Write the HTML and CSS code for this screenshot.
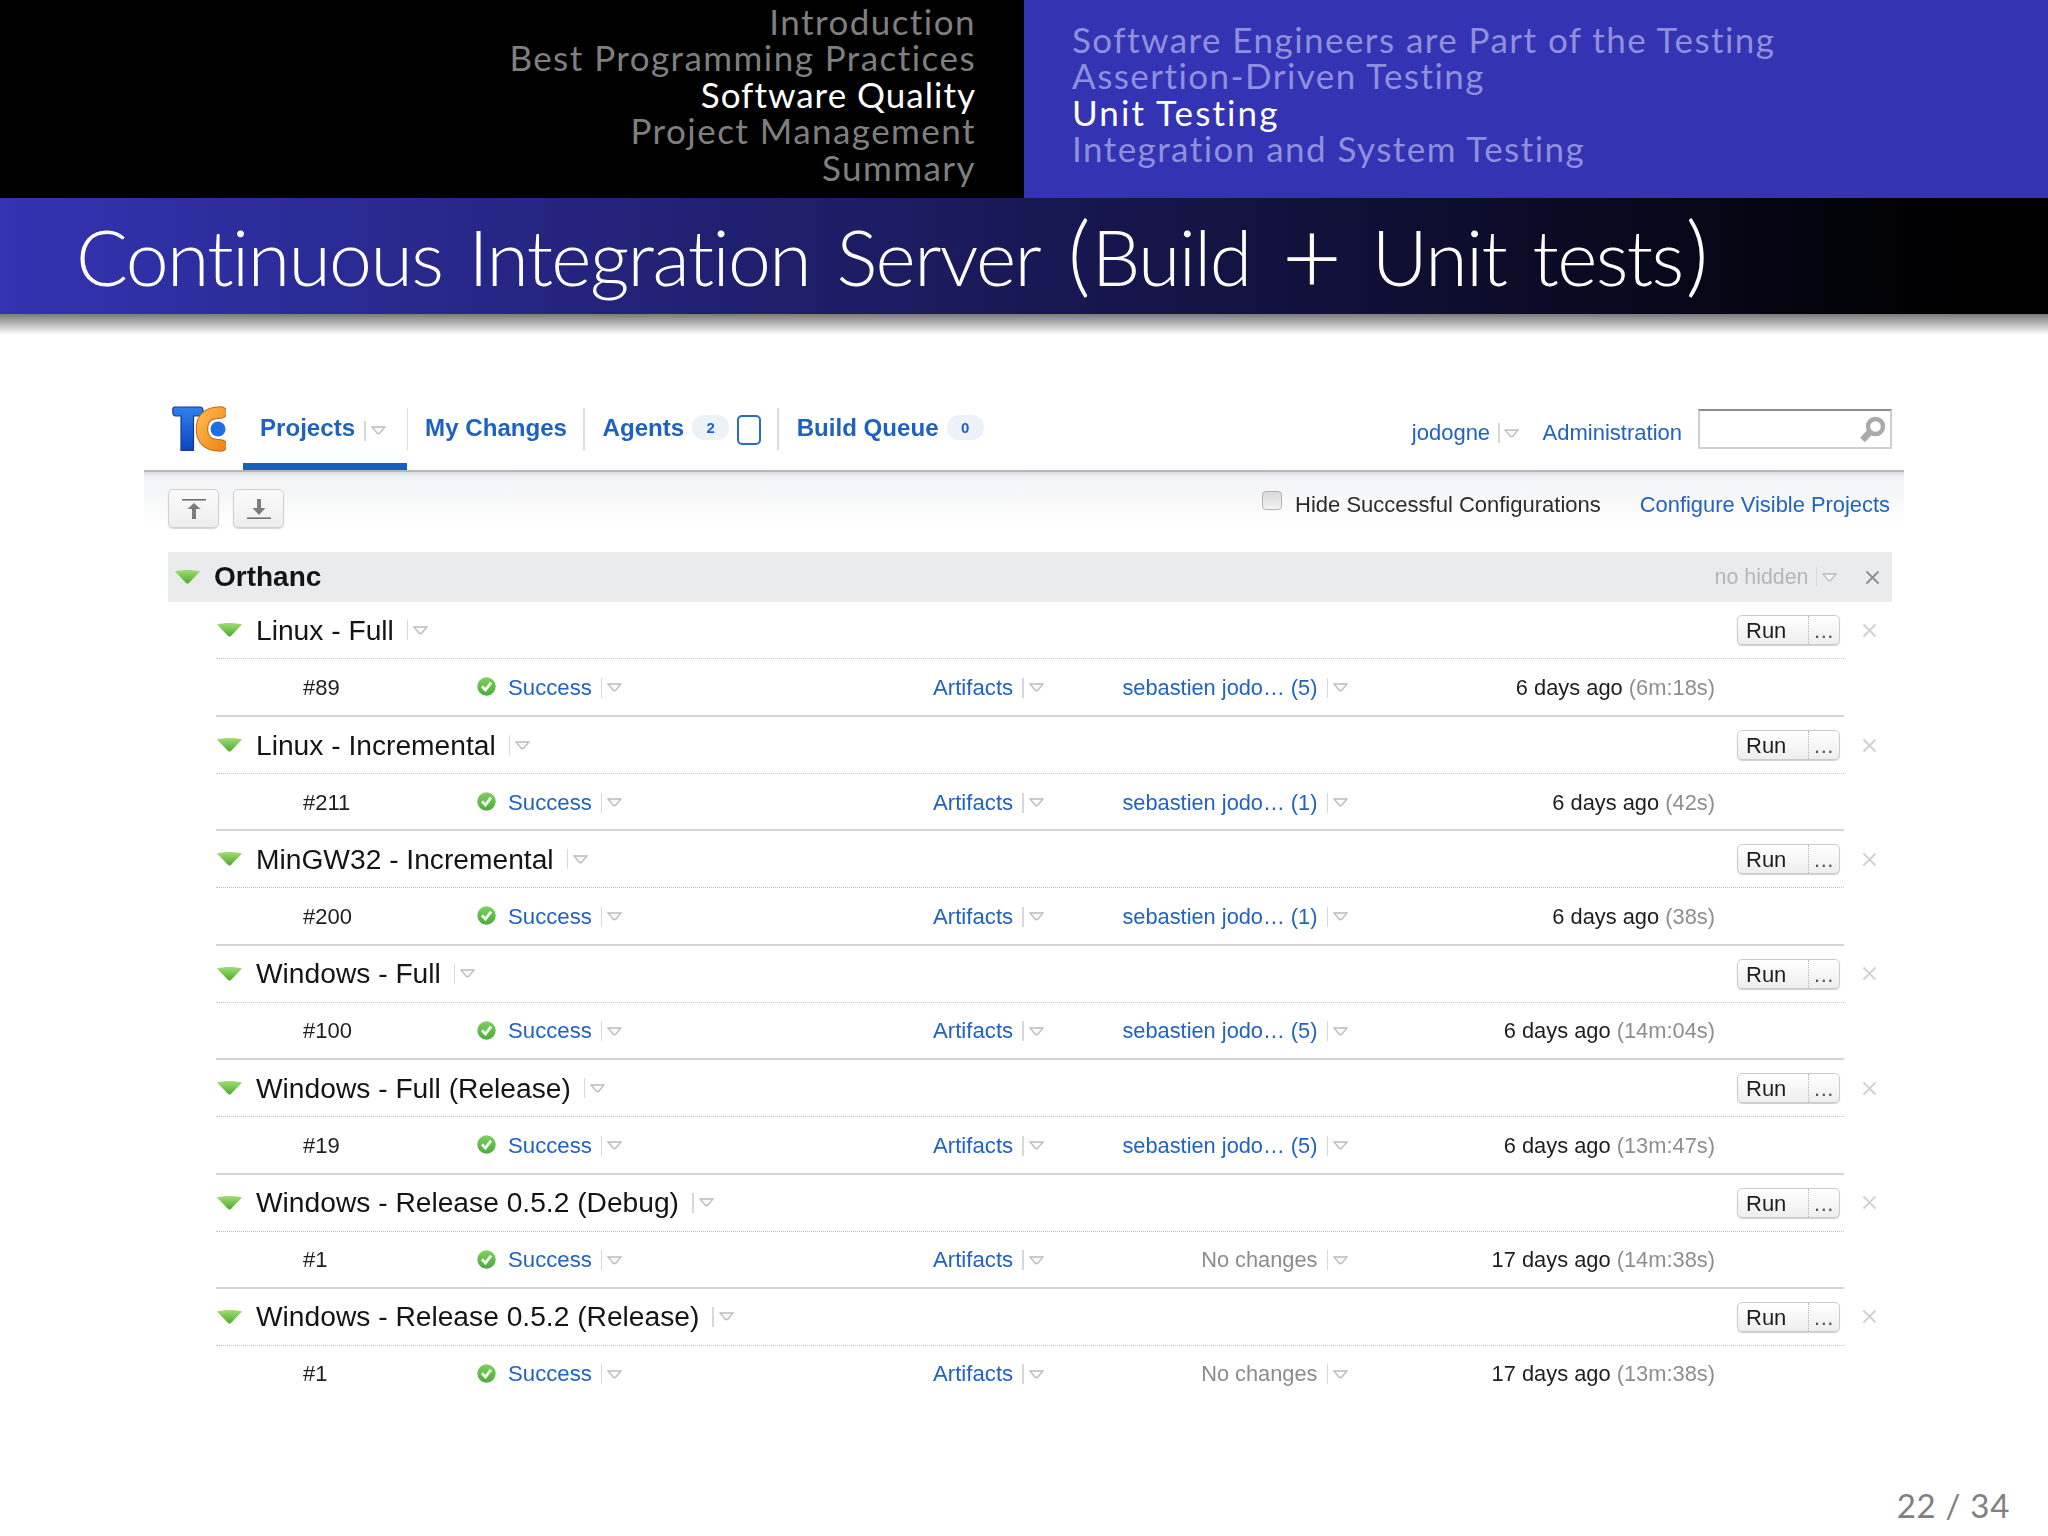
FILE: index.html
```html
<!DOCTYPE html>
<html lang="en">
<head>
<meta charset="utf-8">
<title>Continuous Integration Server (Build + Unit tests)</title>
<link rel="stylesheet" href="styles.css">
</head>
<body>
<svg class="defs" width="0" height="0" aria-hidden="true">
  <defs>
    <linearGradient id="g-green" x1="0" y1="0" x2="0" y2="1"><stop offset="0" stop-color="#a4dc72"/><stop offset="1" stop-color="#4bac2c"/></linearGradient>
    <linearGradient id="g-ok" x1="0" y1="0" x2="0" y2="1"><stop offset="0" stop-color="#7fd060"/><stop offset="1" stop-color="#49ab3a"/></linearGradient>
    <linearGradient id="g-blue" x1="0" y1="0" x2="0" y2="1"><stop offset="0" stop-color="#2f80ee"/><stop offset="1" stop-color="#0c46c0"/></linearGradient>
    <linearGradient id="g-orange" x1="0" y1="0" x2="1" y2="1"><stop offset="0" stop-color="#ffb54a"/><stop offset="1" stop-color="#f08a1c"/></linearGradient>
    <symbol id="i-tri" viewBox="0 0 27 15"><path d="M1 2.5C8 .5 19 .5 26 2.5L15.2 13.8C14.2 14.9 12.8 14.9 11.8 13.8Z" fill="url(#g-green)"/></symbol>
    <symbol id="i-arrow" viewBox="0 0 15 9"><path d="M1 1H14L8.5 7.5H6.5Z" fill="#fbfbfb" stroke="#b9bcc2" stroke-width="1.3"/></symbol>
    <symbol id="i-ok" viewBox="0 0 19 19"><circle cx="9.5" cy="9.5" r="9.2" fill="url(#g-ok)"/><path d="M5 9.3L8.4 13L14 5.6" fill="none" stroke="#f4fbf0" stroke-width="2.8"/></symbol>
    <symbol id="i-x" viewBox="0 0 15 15"><path d="M1.5 1.5L13.5 13.5M13.5 1.5L1.5 13.5" fill="none" stroke="currentColor" stroke-width="1.8"/></symbol>
  </defs>
</svg>

<header class="beamer-nav">
  <div class="nav-left">
    <div>Introduction</div>
    <div>Best Programming Practices</div>
    <div class="current">Software Quality</div>
    <div>Project Management</div>
    <div>Summary</div>
  </div>
  <div class="nav-right">
    <div>Software Engineers are Part of the Testing</div>
    <div>Assertion-Driven Testing</div>
    <div class="current">Unit Testing</div>
    <div>Integration and System Testing</div>
  </div>
</header>
<h1 class="frame-title">Continuous Integration Server <span class="paren">(</span>Build <span class="plus">+</span> Unit tests<span class="paren">)</span></h1>
<div class="frame-shadow"></div>

<main class="tc">
  <nav class="tc-nav">
    <svg class="logo" viewBox="0 0 54 46" width="54" height="46" aria-label="TeamCity">
      <path d="M3 1H28C30 1 31 2.5 31 4.5V7C31 9 30 10 28 10H21.5V44.5H9V10H4C1.8 10 .8 8.5 .8 6V3.5C.8 2 1.5 1 3 1Z" fill="url(#g-blue)" stroke="#123c94" stroke-width="1.2"/>
      <path d="M49 6.5C34 6.5 30 14 30 23C30 33 35 39.5 49 39.5" fill="none" stroke="#c9640f" stroke-width="12.5" stroke-linecap="round"/>
      <path d="M49 6.5C34 6.5 30 14 30 23C30 33 35 39.5 49 39.5" fill="none" stroke="url(#g-orange)" stroke-width="10.5" stroke-linecap="round"/>
      <circle cx="46" cy="23" r="7.5" fill="#1f6fe0"/>
    </svg>
    <div class="tab tab-active">
      <a class="tab-link">Projects</a>
      <span class="mini-sep"></span>
      <svg class="arrow"><use href="#i-arrow"/></svg>
    </div>
    <span class="tab-sep"></span>
    <div class="tab"><a class="tab-link">My Changes</a></div>
    <span class="tab-sep"></span>
    <div class="tab">
      <a class="tab-link">Agents</a>
      <span class="badge">2</span>
      <span class="agent-box"></span>
    </div>
    <span class="tab-sep"></span>
    <div class="tab">
      <a class="tab-link">Build Queue</a>
      <span class="badge">0</span>
    </div>
    <div class="nav-user">
      <a class="link">jodogne</a>
      <span class="mini-sep"></span>
      <svg class="arrow"><use href="#i-arrow"/></svg>
      <a class="link admin">Administration</a>
      <div class="search">
        <svg viewBox="0 0 26 27" width="26" height="27"><circle cx="15.5" cy="10.5" r="7.5" fill="none" stroke="#a9a9a9" stroke-width="4.5"/><path d="M9.5 16.5L2.5 24" stroke="#a9a9a9" stroke-width="6.5"/></svg>
      </div>
    </div>
  </nav>

  <div class="toolbar">
    <button class="icon-btn" type="button" aria-label="Collapse all">
      <svg viewBox="0 0 24 20" width="24" height="20"><path d="M0 .8H24" stroke="#6f6f6f" stroke-width="1.6"/><path d="M12 4L18.5 10H14V20H10V10H5.5Z" fill="#7c7c7c"/></svg>
    </button>
    <button class="icon-btn" type="button" aria-label="Expand all">
      <svg viewBox="0 0 24 20" width="24" height="20"><path d="M0 19.2H24" stroke="#6f6f6f" stroke-width="1.6"/><path d="M10 0H14V9H18.5L12 16L5.5 9H10Z" fill="#7c7c7c"/></svg>
    </button>
    <span class="check"></span>
    <span class="check-label">Hide Successful Configurations</span>
    <a class="link config">Configure Visible Projects</a>
  </div>

  <section class="group">
    <div class="group-head">
      <svg class="tri"><use href="#i-tri"/></svg>
      <span class="group-name">Orthanc</span>
      <span class="no-hidden">no hidden</span>
      <span class="mini-sep"></span>
      <svg class="arrow"><use href="#i-arrow"/></svg>
      <svg class="x x-dark"><use href="#i-x"/></svg>
    </div>

    <article class="proj proj-first">
      <div class="proj-head">
        <svg class="tri"><use href="#i-tri"/></svg>
        <span class="proj-name">Linux - Full</span>
        <span class="mini-sep"></span><svg class="arrow"><use href="#i-arrow"/></svg>
        <div class="run"><span class="run-main">Run</span><span class="run-more">...</span></div>
        <svg class="x"><use href="#i-x"/></svg>
      </div>
      <div class="build">
        <span>#89</span>
        <span class="status"><svg class="ok"><use href="#i-ok"/></svg><a class="link">Success</a><span class="mini-sep"></span><svg class="arrow"><use href="#i-arrow"/></svg></span>
        <span class="status"><a class="link">Artifacts</a><span class="mini-sep"></span><svg class="arrow"><use href="#i-arrow"/></svg></span>
        <span class="changes"><a class="link">sebastien jodo… (5)</a><span class="mini-sep"></span><svg class="arrow"><use href="#i-arrow"/></svg></span>
        <span class="time">6 days ago <span class="dur">(6m:18s)</span></span>
      </div>
    </article>

    <article class="proj">
      <div class="proj-head">
        <svg class="tri"><use href="#i-tri"/></svg>
        <span class="proj-name">Linux - Incremental</span>
        <span class="mini-sep"></span><svg class="arrow"><use href="#i-arrow"/></svg>
        <div class="run"><span class="run-main">Run</span><span class="run-more">...</span></div>
        <svg class="x"><use href="#i-x"/></svg>
      </div>
      <div class="build">
        <span>#211</span>
        <span class="status"><svg class="ok"><use href="#i-ok"/></svg><a class="link">Success</a><span class="mini-sep"></span><svg class="arrow"><use href="#i-arrow"/></svg></span>
        <span class="status"><a class="link">Artifacts</a><span class="mini-sep"></span><svg class="arrow"><use href="#i-arrow"/></svg></span>
        <span class="changes"><a class="link">sebastien jodo… (1)</a><span class="mini-sep"></span><svg class="arrow"><use href="#i-arrow"/></svg></span>
        <span class="time">6 days ago <span class="dur">(42s)</span></span>
      </div>
    </article>

    <article class="proj">
      <div class="proj-head">
        <svg class="tri"><use href="#i-tri"/></svg>
        <span class="proj-name">MinGW32 - Incremental</span>
        <span class="mini-sep"></span><svg class="arrow"><use href="#i-arrow"/></svg>
        <div class="run"><span class="run-main">Run</span><span class="run-more">...</span></div>
        <svg class="x"><use href="#i-x"/></svg>
      </div>
      <div class="build">
        <span>#200</span>
        <span class="status"><svg class="ok"><use href="#i-ok"/></svg><a class="link">Success</a><span class="mini-sep"></span><svg class="arrow"><use href="#i-arrow"/></svg></span>
        <span class="status"><a class="link">Artifacts</a><span class="mini-sep"></span><svg class="arrow"><use href="#i-arrow"/></svg></span>
        <span class="changes"><a class="link">sebastien jodo… (1)</a><span class="mini-sep"></span><svg class="arrow"><use href="#i-arrow"/></svg></span>
        <span class="time">6 days ago <span class="dur">(38s)</span></span>
      </div>
    </article>

    <article class="proj">
      <div class="proj-head">
        <svg class="tri"><use href="#i-tri"/></svg>
        <span class="proj-name">Windows - Full</span>
        <span class="mini-sep"></span><svg class="arrow"><use href="#i-arrow"/></svg>
        <div class="run"><span class="run-main">Run</span><span class="run-more">...</span></div>
        <svg class="x"><use href="#i-x"/></svg>
      </div>
      <div class="build">
        <span>#100</span>
        <span class="status"><svg class="ok"><use href="#i-ok"/></svg><a class="link">Success</a><span class="mini-sep"></span><svg class="arrow"><use href="#i-arrow"/></svg></span>
        <span class="status"><a class="link">Artifacts</a><span class="mini-sep"></span><svg class="arrow"><use href="#i-arrow"/></svg></span>
        <span class="changes"><a class="link">sebastien jodo… (5)</a><span class="mini-sep"></span><svg class="arrow"><use href="#i-arrow"/></svg></span>
        <span class="time">6 days ago <span class="dur">(14m:04s)</span></span>
      </div>
    </article>

    <article class="proj">
      <div class="proj-head">
        <svg class="tri"><use href="#i-tri"/></svg>
        <span class="proj-name">Windows - Full (Release)</span>
        <span class="mini-sep"></span><svg class="arrow"><use href="#i-arrow"/></svg>
        <div class="run"><span class="run-main">Run</span><span class="run-more">...</span></div>
        <svg class="x"><use href="#i-x"/></svg>
      </div>
      <div class="build">
        <span>#19</span>
        <span class="status"><svg class="ok"><use href="#i-ok"/></svg><a class="link">Success</a><span class="mini-sep"></span><svg class="arrow"><use href="#i-arrow"/></svg></span>
        <span class="status"><a class="link">Artifacts</a><span class="mini-sep"></span><svg class="arrow"><use href="#i-arrow"/></svg></span>
        <span class="changes"><a class="link">sebastien jodo… (5)</a><span class="mini-sep"></span><svg class="arrow"><use href="#i-arrow"/></svg></span>
        <span class="time">6 days ago <span class="dur">(13m:47s)</span></span>
      </div>
    </article>

    <article class="proj">
      <div class="proj-head">
        <svg class="tri"><use href="#i-tri"/></svg>
        <span class="proj-name">Windows - Release 0.5.2 (Debug)</span>
        <span class="mini-sep"></span><svg class="arrow"><use href="#i-arrow"/></svg>
        <div class="run"><span class="run-main">Run</span><span class="run-more">...</span></div>
        <svg class="x"><use href="#i-x"/></svg>
      </div>
      <div class="build">
        <span>#1</span>
        <span class="status"><svg class="ok"><use href="#i-ok"/></svg><a class="link">Success</a><span class="mini-sep"></span><svg class="arrow"><use href="#i-arrow"/></svg></span>
        <span class="status"><a class="link">Artifacts</a><span class="mini-sep"></span><svg class="arrow"><use href="#i-arrow"/></svg></span>
        <span class="changes muted">No changes<span class="mini-sep"></span><svg class="arrow"><use href="#i-arrow"/></svg></span>
        <span class="time">17 days ago <span class="dur">(14m:38s)</span></span>
      </div>
    </article>

    <article class="proj proj-last">
      <div class="proj-head">
        <svg class="tri"><use href="#i-tri"/></svg>
        <span class="proj-name">Windows - Release 0.5.2 (Release)</span>
        <span class="mini-sep"></span><svg class="arrow"><use href="#i-arrow"/></svg>
        <div class="run"><span class="run-main">Run</span><span class="run-more">...</span></div>
        <svg class="x"><use href="#i-x"/></svg>
      </div>
      <div class="build">
        <span>#1</span>
        <span class="status"><svg class="ok"><use href="#i-ok"/></svg><a class="link">Success</a><span class="mini-sep"></span><svg class="arrow"><use href="#i-arrow"/></svg></span>
        <span class="status"><a class="link">Artifacts</a><span class="mini-sep"></span><svg class="arrow"><use href="#i-arrow"/></svg></span>
        <span class="changes muted">No changes<span class="mini-sep"></span><svg class="arrow"><use href="#i-arrow"/></svg></span>
        <span class="time">17 days ago <span class="dur">(13m:38s)</span></span>
      </div>
    </article>
  </section>
</main>

<footer class="page-no">22 / 34</footer>
</body>
</html>
```
FILE: styles.css
```css
* { box-sizing: border-box; }
html, body { margin: 0; padding: 0; }
body {
  width: 2048px;
  height: 1536px;
  display: flex;
  flex-direction: column;
  background: #fff;
  font-family: "Liberation Sans", Arial, sans-serif;
  overflow: hidden;
}
.defs { position: absolute; }

/* Beamer header */
.beamer-nav {
  display: flex;
  height: 198px;
  flex: none;
  font-family: Lato, "Open Sans", sans-serif;
  font-size: 35px;
  line-height: 36.5px;
  letter-spacing: 1.45px;
}
.nav-left {
  width: 1024px;
  background: #000;
  color: #7f7f7f;
  text-align: right;
  padding: 2.5px 48px 0 0;
}
.nav-right {
  width: 1024px;
  background: #3333b3;
  color: #8f8fdc;
  padding: 20.5px 0 0 48px;
}
.current { color: #fff; }
.nav-left .current { letter-spacing: 1px; }
.nav-right .current { letter-spacing: 2.1px; }

.frame-title {
  margin: 0;
  flex: none;
  height: 116px;
  padding: 0 0 0 76px;
  background: linear-gradient(90deg, #3333b3 0%, #000 96%);
  color: #fff;
  font-family: Lato, "Open Sans", sans-serif;
  font-weight: 300;
  font-size: 77px;
  line-height: 116px;
  letter-spacing: -1.6px;
  word-spacing: 7px;
  white-space: nowrap;
}
.paren { font-size: 88px; line-height: 0; padding: 0 3px; }
.plus { font-size: 104px; line-height: 0; padding: 0 5px; vertical-align: -8px; }
.frame-shadow {
  flex: none;
  height: 21px;
  background: linear-gradient(#7a7a7a, #fff);
}

/* TeamCity screenshot */
.tc {
  flex: none;
  width: 1760px;
  margin: 63px 0 0 144px;
  filter: blur(0.45px);
  font-size: 22px;
  color: #1e1e1e;
}
.link { color: #2163c2; white-space: nowrap; }

.tc-nav {
  display: flex;
  height: 74px;
  padding-left: 28px;
  border-bottom: 2px solid #b4b6b8;
}
.logo { flex: none; margin: 8px 17px 0 0; }
.tab {
  display: flex;
  align-items: center;
  height: 65px;
  padding: 0 16px 0 18px;
  margin-bottom: 7px;
  white-space: nowrap;
}
.tab-active {
  padding: 0 21px 0 17px;
  height: 72px;
  margin-bottom: 0;
  border-bottom: 7px solid #1560bd;
}
.tab-link {
  color: #1d62bf;
  font-weight: 700;
  font-size: 24.1px;
  margin-top: -6px;
}
.tab-sep {
  flex: none;
  width: 1.5px;
  height: 42px;
  margin-top: 10px;
  background: #dcdcdc;
}
.tab-active + .tab-sep + .tab { padding-left: 17px; }
.badge {
  display: block;
  width: 37px;
  height: 25px;
  margin: -6px 0 0 8px;
  border-radius: 12px;
  background: #edf2f9;
  color: #1d62bf;
  font-size: 15px;
  font-weight: 700;
  line-height: 26px;
  text-align: center;
}
.agent-box {
  display: block;
  width: 24px;
  height: 30px;
  margin: -1px 0 0 8px;
  border: 2px solid #2a6cc0;
  border-radius: 5px;
}
.mini-sep {
  display: inline-block;
  flex: none;
  width: 1.5px;
  height: 20px;
  margin-left: 9px;
  background: #d8d8d8;
  vertical-align: middle;
}
.arrow {
  flex: none;
  display: inline-block;
  width: 15px;
  height: 9px;
  margin-left: 5px;
  vertical-align: middle;
}
.nav-user {
  margin-left: auto;
  display: flex;
  align-items: center;
  height: 62px;
  padding: 8px 12px 0 0;
}
.nav-user .mini-sep { margin-left: 8px; }
.nav-user .arrow { margin-left: 4px; }
.admin { margin-left: 24px; }
.search {
  width: 194px;
  height: 40px;
  margin: -8px 0 0 16px;
  border: 2px solid #cfcfcf;
  border-top-color: #8c8c8c;
  background: #fff;
  display: flex;
  align-items: center;
  justify-content: flex-end;
  padding-right: 4px;
}

.toolbar {
  display: flex;
  align-items: flex-start;
  height: 80px;
  padding: 17px 14px 0 24px;
  background:
    linear-gradient(#dcdde0, #f1f2f4) no-repeat top / 100% 5px,
    linear-gradient(#f1f2f4, #fff) no-repeat 0 5px / 100% 48px;
}
.icon-btn {
  flex: none;
  width: 51px;
  height: 39px;
  margin: 0 14px 0 0;
  padding: 0;
  display: flex;
  align-items: center;
  justify-content: center;
  border: 1.5px solid #cfcfcf;
  border-radius: 5px;
  background: linear-gradient(#fbfbfb, #eeeeee);
  box-shadow: 0 1px 1px #d5d5d5;
}
.check {
  flex: none;
  width: 20px;
  height: 19px;
  margin: 2px 13px 0 auto;
  border: 1.5px solid #b2b2b2;
  border-radius: 4px;
  background: linear-gradient(#d8d8d8, #f4f4f4);
}
.check-label { margin-top: 3px; white-space: nowrap; color: #2b2b2b; }
.config { margin: 3px 0 0 39px; font-size: 21.9px; }

.group-head {
  display: flex;
  align-items: center;
  height: 50px;
  margin-left: 24px;
  width: 1724px;
  padding: 0 12px 0 6px;
  background: #eaebed;
}
.tri { flex: none; width: 27px; height: 15px; margin-top: -1px; }
.group-name {
  margin-left: 13px;
  font-size: 28px;
  font-weight: 700;
  color: #141414;
}
.no-hidden { margin-left: auto; font-size: 21.4px; color: #b6b6b6; }
.group-head .mini-sep { margin-left: 7px; }
.x {
  flex: none;
  width: 15px;
  height: 15px;
  color: #d0d0d0;
}
.x-dark { margin-left: 28px; color: #8e8e8e; }

.proj {
  height: 114.4px;
  margin-left: 72px;
  width: 1628px;
  border-bottom: 2px solid #d4d4d4;
}
.proj-first { height: 115px; }
.proj-last { border-bottom: 0; }
.proj-head {
  display: flex;
  align-items: center;
  height: 57px;
  border-bottom: 1px dotted #c4c4c4;
}
.proj-name {
  margin-left: 13px;
  font-size: 28.2px;
  color: #141414;
  white-space: nowrap;
}
.proj-head .mini-sep { margin-left: 13px; }
.run {
  display: flex;
  align-items: stretch;
  height: 30px;
  width: 103px;
  margin-left: auto;
  border: 1.5px solid #cbcbcb;
  border-radius: 5px;
  background: linear-gradient(#fff, #eeeeee);
  box-shadow: 0 1px 1px #cfcfcf;
  color: #1e1e1e;
}
.run-main {
  flex: 1;
  padding-left: 8px;
  line-height: 30px;
  border-right: 1px dotted #b5b5b5;
}
.run-more {
  width: 30px;
  text-align: center;
  line-height: 30px;
  color: #555;
  letter-spacing: 0.5px;
}
.proj-head .x { margin: 0 -33px 0 22px; }

.build {
  display: grid;
  grid-template-columns: 174px 456px 190px 225px 367px;
  align-items: center;
  height: 56px;
  padding: 1px 0 0 87px;
}
.status { display: flex; align-items: center; white-space: nowrap; font-size: 22.2px; }
.ok { flex: none; width: 19px; height: 19px; margin: -2px 12px 0 0; }
.changes { display: flex; align-items: center; justify-content: flex-end; white-space: nowrap; font-size: 21.8px; }
.muted { color: #8c8c8c; }
.time { text-align: right; white-space: nowrap; font-size: 21.85px; }
.dur { color: #8e8e8e; }

.page-no {
  margin-top: auto;
  padding: 0 38px 11px 0;
  text-align: right;
  font-family: Lato, "Open Sans", sans-serif;
  font-size: 33px;
  line-height: 40px;
  letter-spacing: 0.7px;
  color: #808080;
}
```
